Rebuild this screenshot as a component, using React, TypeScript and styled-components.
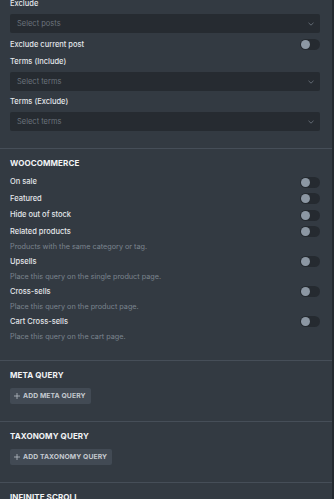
import React from "react";
import styled, { createGlobalStyle } from "styled-components";

const Global = createGlobalStyle`
  html, body { margin: 0; padding: 0; background: #333a42; overflow: hidden; }
  body { font-family: Inter, "Noto Sans", sans-serif; -webkit-font-smoothing: antialiased; }
`;

const Frame = styled.div`
  display: flex;
  width: 334px;
  height: 499px;
  overflow: hidden;
  background: #333a42;
`;

const Panel = styled.div`
  width: 332px;
  display: flex;
  flex-direction: column;
  margin-top: -2px;
`;

const Scrollbar = styled.div`
  width: 2px;
  background: #24292f;
`;

const Section = styled.section<{ $first?: boolean }>`
  display: flex;
  flex-direction: column;
  padding: ${(p) => (p.$first ? "0" : "8px")} 12px 17px 10px;
  border-bottom: 1px solid #464e58;
  gap: 7px;
`;

const Heading = styled.h3`
  margin: 0;
  height: 12px;
  line-height: 12px;
  font-size: 8px;
  font-weight: 700;
  color: #f2f4f6;
  letter-spacing: 0.1px;
`;

const Stack = styled.div`
  display: flex;
  flex-direction: column;
  gap: 5px;
`;

const Field = styled.div`
  display: flex;
  flex-direction: column;
  gap: 4px;
`;

const Label = styled.span`
  height: 12px;
  line-height: 12px;
  font-size: 7.5px;
  font-weight: 500;
  color: #e3e6ea;
`;

const SelectBox = styled.div`
  height: 19px;
  border-radius: 2px;
  background: #262b31;
  display: flex;
  align-items: center;
  justify-content: space-between;
  padding: 0 6px 0 7px;
  font-size: 7.5px;
  color: #6c747d;
`;

const List = styled.div`
  display: flex;
  flex-direction: column;
  gap: 3px;
`;

const Item = styled.div<{ $plain?: boolean }>`
  display: flex;
  flex-direction: column;
  gap: 3px;
  min-height: ${(p) => (p.$plain ? "13.67px" : "0")};
`;

const Row = styled.div<{ $h?: number }>`
  height: ${(p) => p.$h ?? 12}px;
  display: flex;
  align-items: center;
  justify-content: space-between;
`;

const Desc = styled.span`
  height: 12px;
  line-height: 12px;
  font-size: 7.25px;
  color: #7b848e;
`;

const Track = styled.span`
  width: 20px;
  height: 11px;
  border-radius: 6px;
  background: #252a30;
  display: flex;
  align-items: center;
  padding-left: 1px;
  box-sizing: border-box;
`;

const Knob = styled.span`
  width: 9px;
  height: 9px;
  border-radius: 50%;
  background: #8c97a3;
`;

const AddButton = styled.button`
  align-self: flex-start;
  height: 16px;
  border: none;
  border-radius: 2px;
  background: #424a54;
  color: #c4c9cf;
  font-family: inherit;
  font-size: 6.8px;
  font-weight: 700;
  letter-spacing: 0.1px;
  display: flex;
  align-items: center;
  gap: 3px;
  padding: 0 5px 0 4px;
`;

const Chevron = () => (
  <svg width="6" height="4" viewBox="0 0 6 4" fill="none">
    <path d="M0.5 0.8 L3 3.2 L5.5 0.8" stroke="#69717a" strokeWidth="0.9" />
  </svg>
);

const Plus = () => (
  <svg width="6" height="6" viewBox="0 0 6 6" fill="none">
    <path d="M3 0 V6 M0 3 H6" stroke="#b8bec5" strokeWidth="0.8" />
  </svg>
);

const Toggle = () => (
  <Track>
    <Knob />
  </Track>
);

const Select = ({ placeholder }: { placeholder: string }) => (
  <SelectBox>
    <span>{placeholder}</span>
    <Chevron />
  </SelectBox>
);

const wooItems: { label: string; desc?: string }[] = [
  { label: "On sale" },
  { label: "Featured" },
  { label: "Hide out of stock" },
  { label: "Related products", desc: "Products with the same category or tag." },
  { label: "Upsells", desc: "Place this query on the single product page." },
  { label: "Cross-sells", desc: "Place this query on the product page." },
  { label: "Cart Cross-sells", desc: "Place this query on the cart page." },
];

export default function App() {
  return (
    <Frame>
      <Global />
      <Panel>
        <Section $first>
          <Stack>
            <Field>
              <Label>Exclude</Label>
              <Select placeholder="Select posts" />
            </Field>
            <Row $h={13}>
              <Label>Exclude current post</Label>
              <Toggle />
            </Row>
            <Field>
              <Label>Terms (Include)</Label>
              <Select placeholder="Select terms" />
            </Field>
            <Field>
              <Label>Terms (Exclude)</Label>
              <Select placeholder="Select terms" />
            </Field>
          </Stack>
        </Section>

        <Section>
          <Heading>WOOCOMMERCE</Heading>
          <List>
            {wooItems.map((it) => (
              <Item key={it.label} $plain={!it.desc}>
                <Row>
                  <Label>{it.label}</Label>
                  <Toggle />
                </Row>
                {it.desc && <Desc>{it.desc}</Desc>}
              </Item>
            ))}
          </List>
        </Section>

        <Section>
          <Heading>META QUERY</Heading>
          <AddButton>
            <Plus />
            ADD META QUERY
          </AddButton>
        </Section>

        <Section>
          <Heading>TAXONOMY QUERY</Heading>
          <AddButton>
            <Plus />
            ADD TAXONOMY QUERY
          </AddButton>
        </Section>

        <Section>
          <Heading>INFINITE SCROLL</Heading>
        </Section>
      </Panel>
      <Scrollbar />
    </Frame>
  );
}
